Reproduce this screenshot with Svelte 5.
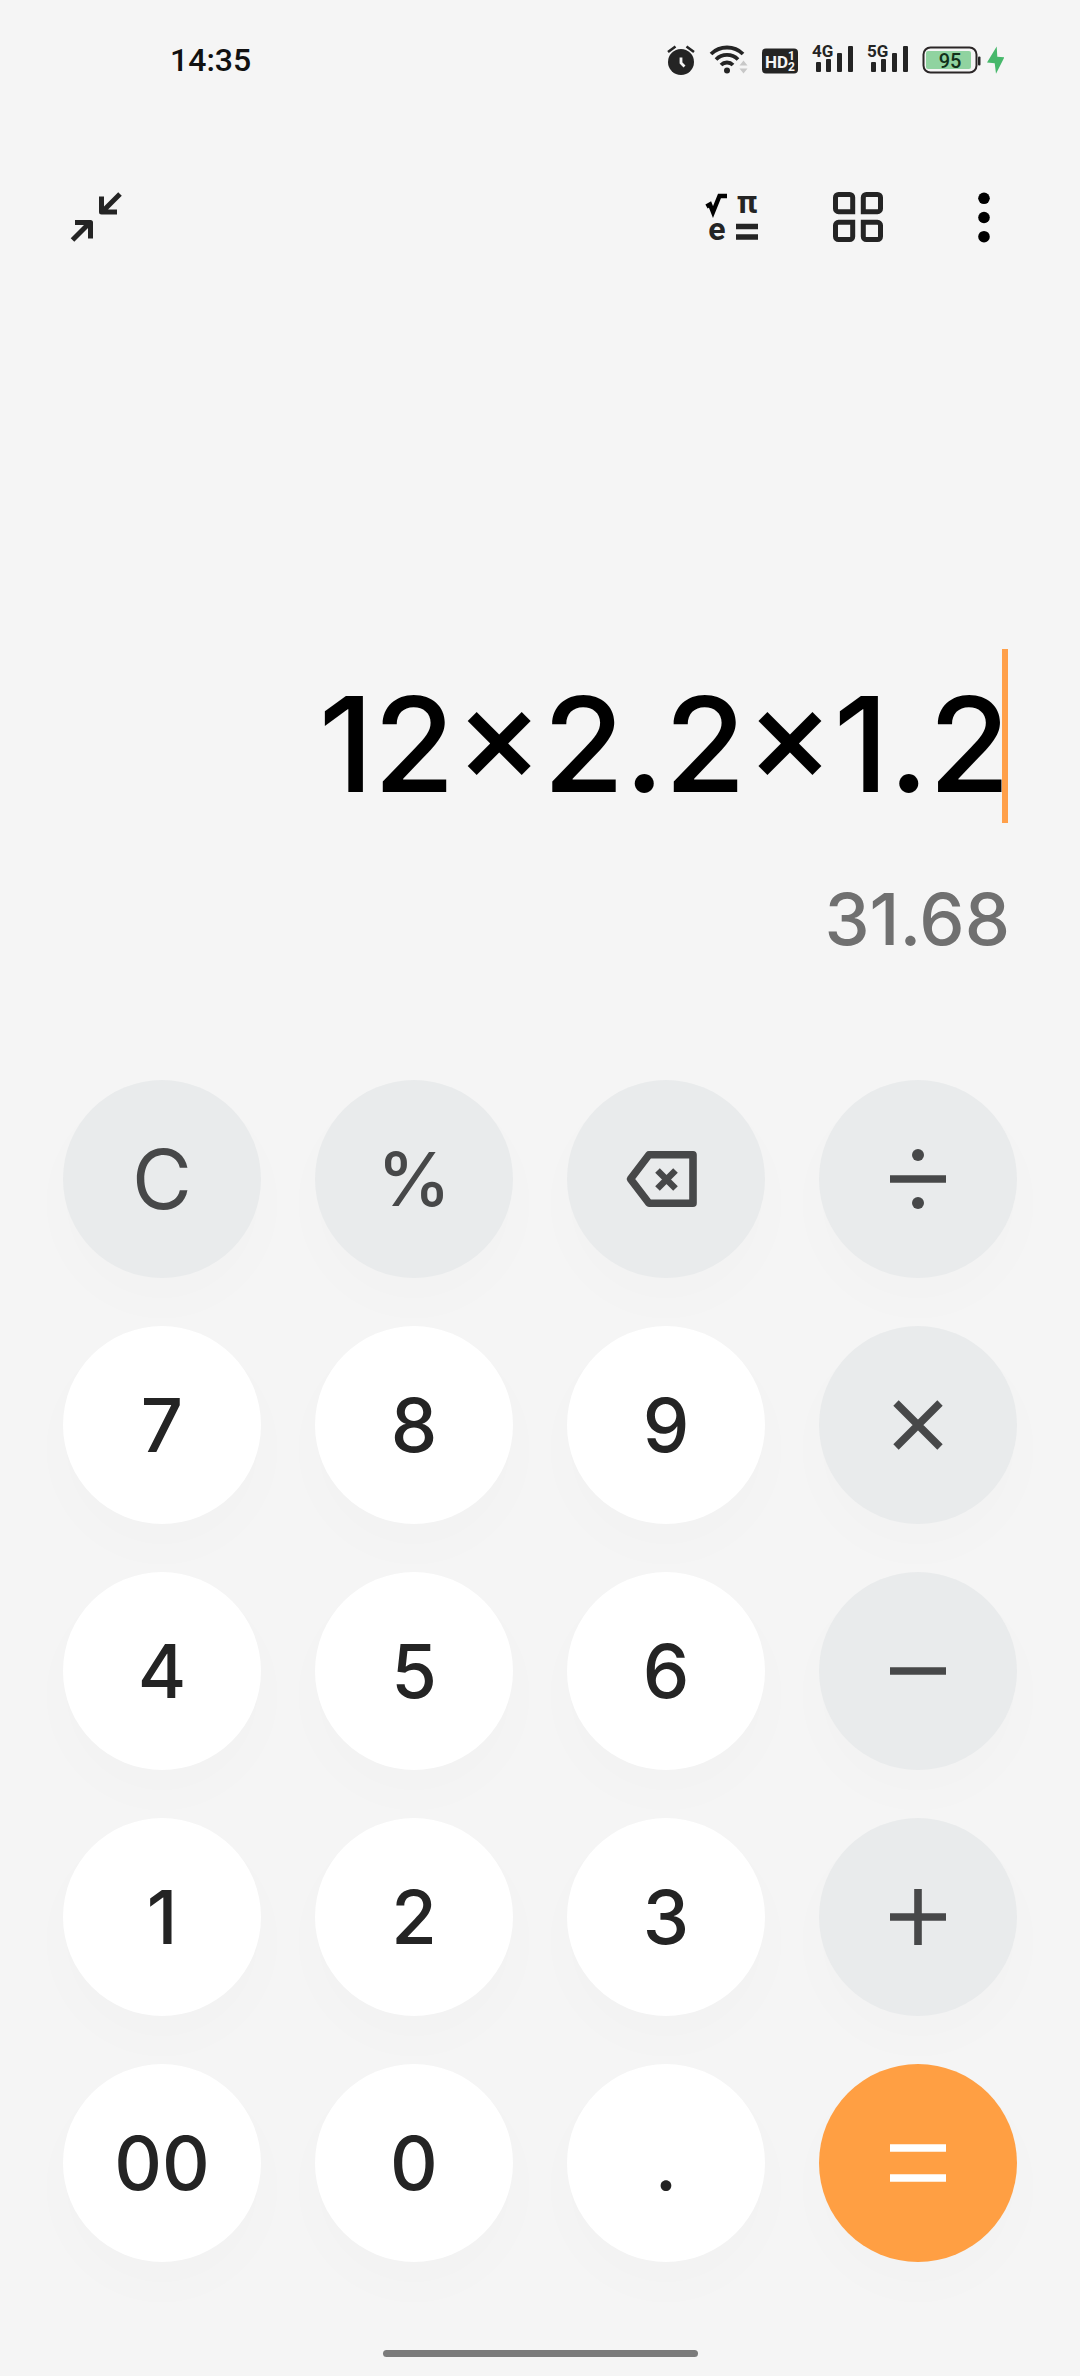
<script lang="ts">
  type Key = { label: string; value: string; kind: 'digit' | 'func' | 'op' | 'equals' };

  const keys: Key[] = [
    { label: 'Clear', value: 'C', kind: 'func' },
    { label: 'Percent', value: '%', kind: 'func' },
    { label: 'Backspace', value: 'back', kind: 'op' },
    { label: 'Divide', value: '÷', kind: 'op' },
    ...digits('7', '8', '9'),
    { label: 'Multiply', value: '×', kind: 'op' },
    ...digits('4', '5', '6'),
    { label: 'Subtract', value: '−', kind: 'op' },
    ...digits('1', '2', '3'),
    { label: 'Add', value: '+', kind: 'op' },
    ...digits('00', '0', '.'),
    { label: 'Equals', value: '=', kind: 'equals' },
  ];

  let expression = $state('12×2.2×1.2');
  let result = $derived(evaluate(expression));

  function digits(...values: string[]): Key[] {
    return values.map((value) => ({ label: value, value, kind: 'digit' }));
  }

  function evaluate(text: string): string {
    const source = text
      .replaceAll('×', '*')
      .replaceAll('÷', '/')
      .replaceAll('−', '-')
      .replaceAll('%', '/100');
    try {
      const value = new Function(`return ${source}`)();
      return Number.isFinite(value) ? String(Number(value.toFixed(10))) : '';
    } catch {
      return '';
    }
  }

  function press(value: string) {
    if (value === 'C') expression = '';
    else if (value === 'back') expression = expression.slice(0, -1);
    else if (value === '=') expression = result || expression;
    else expression += value;
  }
</script>

{#snippet signal(name: string)}
  <svg width="41" height="40" viewBox="0 -4 41 40">
    <text x="0" y="13" class="net">{name}</text>
    <rect x="4" y="18" width="5" height="10" rx="1" />
    <rect x="14" y="15" width="5" height="13" rx="1" />
    <rect x="25" y="9" width="5" height="19" rx="1" />
    <rect x="36" y="2" width="5" height="26" rx="1" />
  </svg>
{/snippet}

<div class="app">
  <div class="status-bar">
    <time>14:35</time>
    <div class="status-icons">
      <svg width="28" height="32" viewBox="0 0 28 32">
        <circle cx="14" cy="18" r="13" />
        <path class="line" stroke-width="2.6" d="M1 8 8.5 2.5M27 8 19.5 2.5" />
        <path class="line light" stroke-width="2.8" d="M14 13.5v5.5l3.5 3.5" />
      </svg>
      <svg width="39" height="32" viewBox="0 0 39 32">
        <circle cx="18" cy="26.5" r="3" />
        <path
          class="line"
          stroke-width="3.8"
          d="M2 10a23 23 0 0 1 32 0M7 15.5a15.6 15.6 0 0 1 22 0M12 21a8.5 8.5 0 0 1 12 0"
        />
        <path class="faint" d="m34.500 16.500 4 5h-8zM34.500 29.500l4-5h-8z" />
      </svg>
      <svg width="36" height="32" viewBox="0 0 36 32">
        <rect x="0" y="4.500" width="36" height="25" rx="4" />
        <text x="3" y="24" class="hd">HD</text>
        <text x="26" y="16" class="sim">1</text>
        <text x="26" y="27" class="sim">2</text>
      </svg>
      {@render signal('4G')}
      {@render signal('5G')}
      <svg width="82" height="32" viewBox="0 0 82 32">
        <rect x="1.500" y="3.500" width="53" height="25" rx="7" fill="none" stroke="#2b2627" stroke-width="2" />
        <rect x="4" y="7" width="45" height="18" rx="2" fill="#90d3a0" />
        <rect x="56" y="12.500" width="2.500" height="9" rx="1" />
        <text x="28" y="23.500" text-anchor="middle" class="level">95</text>
        <path fill="#47b86b" d="M74.700 2.500 65 18.500l7.700.8 1.300 10.500 8.300-16.500-7-.6z" />
      </svg>
    </div>
  </div>

  <header>
    <button class="tool" aria-label="Collapse">
      <svg viewBox="0 0 64 64">
        <g fill="none" stroke="#242424" stroke-width="5" stroke-linejoin="round">
          <path d="M56 9 38 27M37.500 11.500V27H53" />
          <path d="M8.500 55 26.500 37M11 37.500H26.500V53.500" />
        </g>
      </svg>
    </button>
    <nav>
      <button class="tool" aria-label="Scientific">
        <svg viewBox="0 0 64 64">
          <path fill="none" stroke="#000" stroke-width="4.400" d="M6.500 21.500 10 19.500l3 7.500 6.500-16H27" />
          <text x="47" y="28" text-anchor="middle" class="math">π</text>
          <text x="17" y="55" text-anchor="middle" class="math">e</text>
          <path stroke="#242424" stroke-width="5.400" d="M36 41.500H58M36 52H58" />
        </svg>
      </button>
      <button class="tool" aria-label="Converter">
        <svg viewBox="0 0 64 64">
          {#each [0, 90, 180, 270] as angle}
            <path
              fill="none"
              stroke="#242424"
              stroke-width="5"
              transform="rotate({angle} 32 32)"
              d="M26.700 26.700V12.500a3 3 0 0 0-3-3H12.500a3 3 0 0 0-3 3V23.700a3 3 0 0 0 3 3z"
            />
          {/each}
        </svg>
      </button>
      <button class="tool" aria-label="More">
        <svg viewBox="0 0 64 64">
          <circle cx="32" cy="13.300" r="5.800" fill="#000" />
          <circle cx="32" cy="32.500" r="5.800" fill="#000" />
          <circle cx="32" cy="51.700" r="5.800" fill="#000" />
        </svg>
      </button>
    </nav>
  </header>

  <main>
    <section class="display">
      <div class="entry">
        <span class="caret"></span>
        <input type="text" aria-label="Expression" inputmode="none" bind:value={expression} />
      </div>
      <output>{result}</output>
    </section>

    <section class="keypad">
      {#each keys as key}
        <button class="key {key.kind}" aria-label={key.label} onclick={() => press(key.value)}>
          {#if key.kind === 'digit'}
            {key.value}
          {:else if key.kind === 'func'}
            <span class:percent={key.value === '%'}>{key.value}</span>
          {:else}
            <svg width="90" height="90" viewBox="-45 -45 90 90">
              {#if key.value === 'back'}
                <path stroke-linejoin="round" d="M-35.500 0-17-24.300H27V24.300H-17z" />
                <path stroke-width="6.500" d="M-8.500-8.500 9.500 9.500M9.500-8.500-8.500 9.500" />
              {:else if key.value === '÷'}
                <path d="M-28 0H28" />
                <circle cy="-24" r="6" />
                <circle cy="24" r="6" />
              {:else if key.value === '×'}
                <path d="M-22-22 22 22M22-22-22 22" />
              {:else if key.value === '−'}
                <path d="M-28 0H28" />
              {:else if key.value === '+'}
                <path d="M-28 0H28M0-28V28" />
              {:else}
                <path d="M-28-15H28M-28 15H28" />
              {/if}
            </svg>
          {/if}
        </button>
      {/each}
    </section>
  </main>

  <div class="home-bar"></div>
</div>

<style>
  :global(body) {
    background: #f5f5f5;
  }

  .app {
    display: flex;
    flex-direction: column;
    box-sizing: border-box;
    min-height: 100vh;
    padding-bottom: 19px;
    background: #f5f5f5;
    font-family: Inter, "Liberation Sans", sans-serif;
  }

  .status-bar {
    display: flex;
    align-items: center;
    justify-content: space-between;
    height: 120px;
    padding: 0 76px 0 170px;
    font-family: Roboto, sans-serif;
  }

  time {
    font-size: 32px;
    font-weight: 500;
    color: #111;
  }

  .status-icons {
    display: flex;
    align-items: center;
    gap: 14px;
    fill: #242424;
  }

  .line {
    fill: none;
    stroke: #242424;
  }

  .light {
    stroke: #f5f5f5;
  }

  .faint {
    fill: #c8c8c8;
  }

  .net {
    font-size: 17px;
    font-weight: 700;
  }

  .hd {
    font-size: 17px;
    font-weight: 700;
    fill: #f5f5f5;
  }

  .sim {
    font-size: 12px;
    font-weight: 700;
    fill: #f5f5f5;
  }

  .level {
    font-size: 20px;
    font-weight: 500;
    fill: #12301a;
  }

  header {
    display: flex;
    justify-content: space-between;
    padding: 65px 64px 0;
  }

  nav {
    display: flex;
    gap: 62px;
  }

  button {
    padding: 0;
    border: none;
    background: none;
    font-family: inherit;
    cursor: pointer;
  }

  .tool,
  .tool svg {
    display: block;
    width: 64px;
    height: 64px;
    overflow: visible;
  }

  .math {
    font-family: Roboto, sans-serif;
    font-size: 32px;
    font-weight: 700;
    fill: #242424;
  }

  main {
    display: flex;
    flex: 1;
    flex-direction: column;
    justify-content: flex-end;
  }

  .display {
    display: flex;
    flex-direction: column;
    gap: 38px;
    padding: 0 70px;
    text-align: right;
  }

  .entry {
    position: relative;
  }

  .caret {
    position: absolute;
    top: 0;
    right: 2px;
    width: 6px;
    height: 174px;
    background: #ffa04a;
  }

  input {
    position: relative;
    display: block;
    box-sizing: border-box;
    width: 100%;
    height: 190px;
    padding: 0;
    border: none;
    outline: none;
    background: transparent;
    color: #000;
    font-family: inherit;
    font-size: 132px;
    font-weight: 500;
    text-align: right;
  }

  output {
    min-height: 84px;
    font-size: 72px;
    font-weight: 500;
    line-height: 84px;
    color: #707070;
  }

  .keypad {
    display: grid;
    grid-template-columns: repeat(4, 1fr);
    gap: 48px 54px;
    padding: 119px 63px 88px;
  }

  .key {
    display: flex;
    align-items: center;
    justify-content: center;
    aspect-ratio: 1;
    border-radius: 50%;
    background: #fff;
    box-shadow: 0 24px 60px rgba(0, 0, 0, 0.015);
    color: #242424;
    font-size: 74px;
    font-weight: 500;
  }

  .func,
  .op {
    background: #e9ebec;
    color: #474849;
  }

  .func {
    font-size: 82px;
    font-weight: 400;
  }

  .percent {
    font-size: 74px;
    font-weight: 500;
  }

  .equals {
    background: #ff9f43;
    color: #fff;
  }

  .key svg {
    fill: none;
    stroke: currentColor;
    stroke-width: 7.6;
  }

  .key circle {
    fill: currentColor;
    stroke: none;
  }

  .home-bar {
    align-self: center;
    width: 315px;
    height: 7px;
    border-radius: 4px;
    background: #7b7b7b;
  }
</style>
